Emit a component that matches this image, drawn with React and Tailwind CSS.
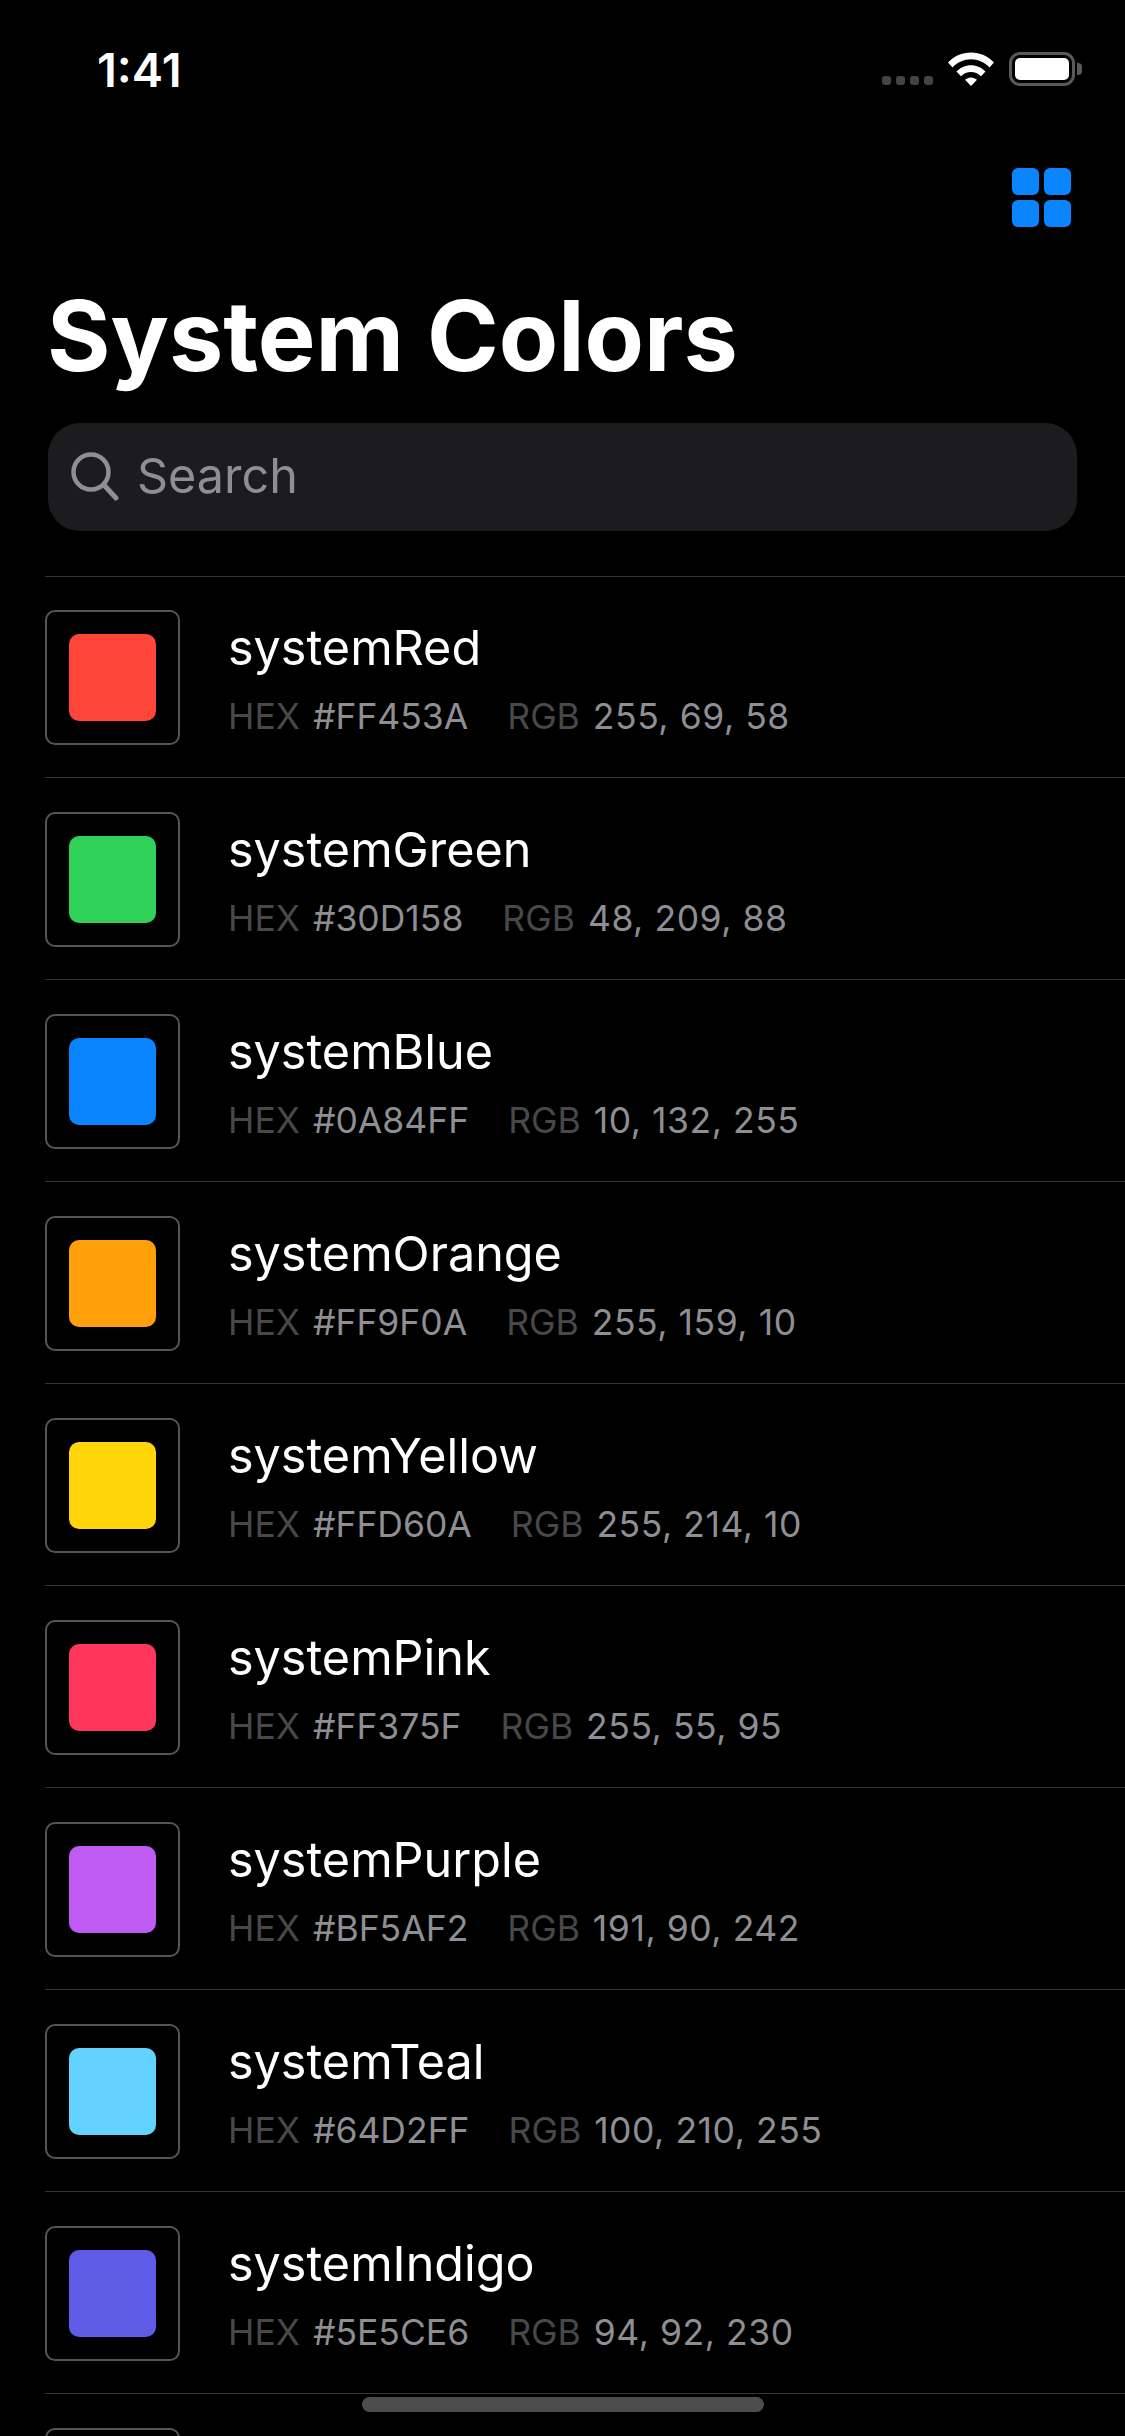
import React from "react";

const colors = [
  ["systemRed", "#FF453A", "255, 69, 58"],
  ["systemGreen", "#30D158", "48, 209, 88"],
  ["systemBlue", "#0A84FF", "10, 132, 255"],
  ["systemOrange", "#FF9F0A", "255, 159, 10"],
  ["systemYellow", "#FFD60A", "255, 214, 10"],
  ["systemPink", "#FF375F", "255, 55, 95"],
  ["systemPurple", "#BF5AF2", "191, 90, 242"],
  ["systemTeal", "#64D2FF", "100, 210, 255"],
  ["systemIndigo", "#5E5CE6", "94, 92, 230"],
];

function Wifi() {
  return (
    <svg width="46" height="34" viewBox="0 0 46 34" className="block">
      <path d="M0 10.5C6 4 14 0.5 23 0.5S40 4 46 10.5L41.5 15.5C36.5 10.3 30 7.3 23 7.3S9.5 10.3 4.5 15.5Z" fill="#fff" />
      <path d="M8.5 19.5C12.2 15.6 17.3 13.2 23 13.2S33.8 15.6 37.5 19.5L33 24.3C30.3 21.5 26.8 20 23 20S15.7 21.5 13 24.3Z" fill="#fff" />
      <path d="M17 27.8C18.6 26.3 20.7 25.4 23 25.4S27.4 26.3 29 27.8L23 34Z" fill="#fff" />
    </svg>
  );
}

function Battery() {
  return (
    <div className="flex items-center">
      <div className="w-[66px] h-[34px] rounded-[11px] border-[3px] border-[#5a5a5c] p-[3px] flex">
        <div className="flex-1 bg-white rounded-[5px]" />
      </div>
      <div className="w-[5px] h-[12px] ml-[2px] bg-[#5a5a5c] rounded-r-[4px]" />
    </div>
  );
}

function Row({ name, hex, rgb }) {
  return (
    <div className="ml-[45px] h-[202px] first:h-[201px] border-t border-[#363638] flex items-start pt-[34px] first:pt-[33px]">
      <div className="w-[135px] h-[135px] shrink-0 rounded-[10px] border-[2px] border-[#555557] flex items-center justify-center">
        <div className="w-[87px] h-[87px] rounded-[10px]" style={{ backgroundColor: hex }} />
      </div>
      {name && (
        <div className="ml-[48px] flex flex-col">
          <div className="text-[48.5px] leading-[58px] text-white mt-[9px]">{name}</div>
          <div className="flex text-[35.5px] leading-[44px] mt-[18px] whitespace-nowrap">
            <span className="text-[#48484a]">HEX</span>
            <span className="ml-[13px] text-[#8e8e93]">{hex}</span>
            <span className="ml-[39px] text-[#48484a]">RGB</span>
            <span className="ml-[13px] text-[#8e8e93] tracking-[0.55px]">{rgb}</span>
          </div>
        </div>
      )}
    </div>
  );
}

export default function App() {
  return (
    <div className="relative w-[1125px] h-[2436px] overflow-hidden bg-black font-['Inter',sans-serif]">
      <div className="h-[132px] flex items-start justify-between pt-[46px] pl-[97px] pr-[43px]">
        <div className="text-[47px] leading-[48px] font-semibold text-white">1:41</div>
        <div className="flex items-start pt-[6px]">
          <div className="flex gap-[5px] mt-[24px]">
            <div className="w-[9px] h-[9px] rounded-[3px] bg-[#444446]" />
            <div className="w-[9px] h-[9px] rounded-[3px] bg-[#444446]" />
            <div className="w-[9px] h-[9px] rounded-[3px] bg-[#444446]" />
            <div className="w-[9px] h-[9px] rounded-[3px] bg-[#444446]" />
          </div>
          <div className="ml-[15px]"><Wifi /></div>
          <div className="ml-[15px]"><Battery /></div>
        </div>
      </div>
      <div className="flex justify-end pt-[36px] pr-[54px]">
        <div className="grid grid-cols-[27px_27px] grid-rows-[27px_27px] gap-[5px]">
          <div className="bg-[#0a84ff] rounded-[6px]" />
          <div className="bg-[#0a84ff] rounded-[6px]" />
          <div className="bg-[#0a84ff] rounded-[6px]" />
          <div className="bg-[#0a84ff] rounded-[6px]" />
        </div>
      </div>
      <div className="ml-[47px] mt-[51px] text-[97px] leading-[116px] font-bold text-white">System Colors</div>
      <div className="mx-[48px] mt-[29px] h-[108px] rounded-[32px] bg-[#1c1c1e] flex items-center pl-[23px]">
        <svg width="48" height="50" viewBox="0 0 48 50" fill="none" stroke="#8e8e93" strokeWidth="4.5" strokeLinecap="round" className="block">
          <circle cx="20" cy="20" r="17.5" />
          <line x1="33" y1="33" x2="45" y2="46" strokeWidth="5" />
        </svg>
        <span className="ml-[18px] text-[48.5px] leading-[58px] -mt-[2px] text-[#8e8e93]">Search</span>
      </div>
      <div className="mt-[45px]">
        {colors.map(([name, hex, rgb]) => (
          <Row key={name} name={name} hex={hex} rgb={rgb} />
        ))}
        <Row hex="#8E8E93" />
      </div>
      <div className="absolute left-[362px] top-[2397px] w-[402px] h-[15px] rounded-full bg-[#4d4d4f]" />
    </div>
  );
}
